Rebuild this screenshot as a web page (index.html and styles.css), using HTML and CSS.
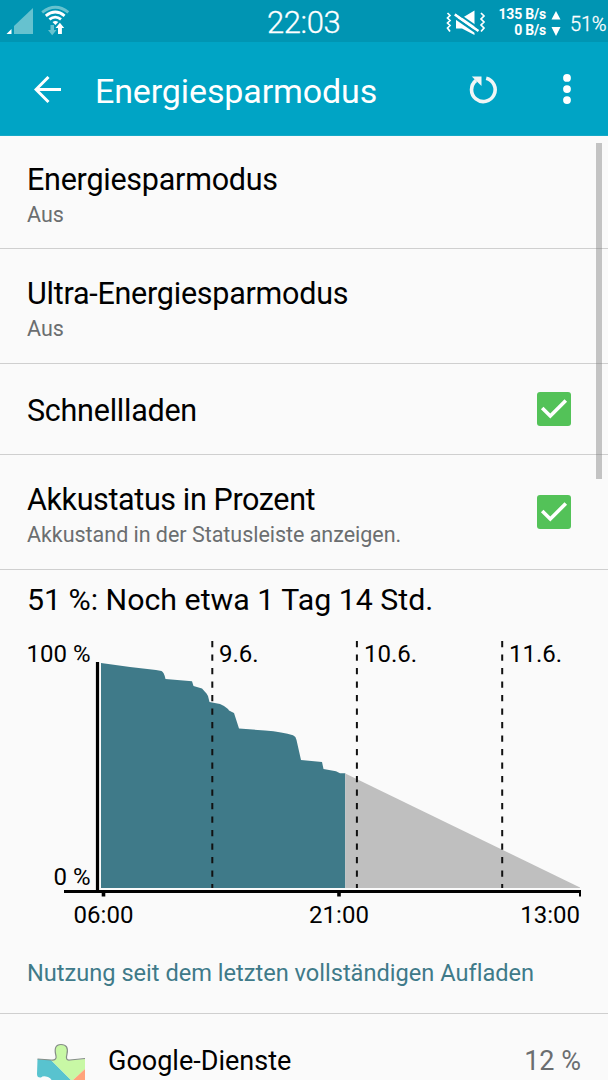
FILE: index.html
```
<!DOCTYPE html>
<html lang="de">
  <head>
    <meta charset="UTF-8" />
    <meta name="viewport" content="width=device-width, initial-scale=1.0" />
    <title>Energiesparmodus</title>
    <link rel="stylesheet" href="styles.css">
  </head>
  <body>
    <div class="statusBar">
      <svg class="statusLeft" width="80" height="42" viewBox="0 0 80 42">
        <path d="M14 34V26L33 8V34Z" fill="#66c2cf" />
        <path d="M6.5 34L11.5 29V34Z" fill="#fff" />
        <g fill="none" stroke-width="2.8">
          <path d="M42.2 12.3Q55.5 2.2 68.3 12.3" stroke="#66c2cf" />
          <path d="M45.8 15.8Q55.4 8.2 64.6 15.8" stroke="#fff" />
          <path d="M49.4 19.4Q55.4 14.8 61 19.4" stroke="#fff" />
        </g>
        <path d="M52.5 22Q55.5 19.8 58.3 22L55.4 25Z" fill="#fff" />
        <path d="M50.5 25H54V30H56.5L52.2 35.3L48 30H50.5Z" fill="#66c2cf" />
        <path d="M58 34V28H55.6L59.9 22.8L64.2 28H61.9V34Z" fill="#fff" />
      </svg>
      <span class="clock">22:03</span>
      <div class="statusRight">
        <svg width="42" height="30" viewBox="446 6 42 30">
          <path d="M456 16H462L474.500 8.500V33L462 26.500H456Z" fill="#fff" />
          <path d="M454 15L478.500 32" stroke="#0095b3" stroke-width="2.4" />
          <path d="M454.800 12.400L478.500 29" stroke="#fff" stroke-width="2.6" />
          <path d="M455.500 10L480 27" stroke="#0095b3" stroke-width="2" />
          <path d="M447.500 11L450 13.500L447.500 16L450 18.500L447.500 21L450 23.500L447.500 26L450 29.500M481 11L484 14L481 17L484 20L481 23L484 26L481 29.500" fill="none" stroke="#fff" stroke-width="1.7" />
        </svg>
        <div class="traffic">
          <span>135 B/s</span>
          <span>0 B/s</span>
        </div>
        <svg class="trafficArrows" width="10" height="26" viewBox="0 0 10 26">
          <path d="M5 1L9.500 9.500H0.500ZM0.500 17H9.500L5 26Z" fill="#fff" />
        </svg>
        <span class="percent">51%</span>
      </div>
    </div>

    <div class="appBar">
      <svg class="backIcon" width="28" height="28" viewBox="34 76 28 28">
        <path d="M48.500 77L36 89.500L48.500 102M36 89.500H61" fill="none" stroke="#fff" stroke-width="3" />
      </svg>
      <h1 class="appTitle">Energiesparmodus</h1>
      <svg class="refreshIcon" width="30" height="30" viewBox="468 74 30 30">
        <path d="M485.200 78.300A11.800 11.800 0 1 1 475 80.500" fill="none" stroke="#f1f5f5" stroke-width="3.6" />
        <path d="M470.800 76.500H480.500V86Z" fill="#f1f5f5" />
      </svg>
      <svg class="menuIcon" width="8" height="30" viewBox="0 0 8 30">
        <circle cx="4" cy="3.9" r="3.9" fill="#fff" />
        <circle cx="4" cy="15.1" r="3.9" fill="#fff" />
        <circle cx="4" cy="26.1" r="3.9" fill="#fff" />
      </svg>
    </div>

    <div class="settings">
      <div class="row rowFirst">
        <div class="rowText">
          <div class="rowTitle">Energiesparmodus</div>
          <div class="rowSub">Aus</div>
        </div>
      </div>
      <div class="row">
        <div class="rowText">
          <div class="rowTitle">Ultra-Energiesparmodus</div>
          <div class="rowSub">Aus</div>
        </div>
      </div>
      <div class="row rowShort">
        <div class="rowText">
          <div class="rowTitle">Schnellladen</div>
        </div>
        <svg class="check" width="34" height="34" viewBox="0 0 34 34">
          <rect width="34" height="34" rx="3" fill="#53c258" />
          <path d="M5.200 16L13.300 24L28.800 8.500" fill="none" stroke="#fff" stroke-width="3.6" />
        </svg>
      </div>
      <div class="row">
        <div class="rowText">
          <div class="rowTitle titlePercent">Akkustatus in Prozent</div>
          <div class="rowSub">Akkustand in der Statusleiste anzeigen.</div>
        </div>
        <svg class="check" width="34" height="34" viewBox="0 0 34 34">
          <rect width="34" height="34" rx="3" fill="#53c258" />
          <path d="M5.200 16L13.300 24L28.800 8.500" fill="none" stroke="#fff" stroke-width="3.6" />
        </svg>
      </div>

      <div class="battery">
        <div class="batteryTitle">51 %: Noch etwa 1 Tag 14 Std.</div>
        <svg class="chart" width="608" height="310" viewBox="0 630 608 310">
          <path d="M101 663L130 667L156 670L161.500 671Q164 672 165.500 679L192 681.300L193.500 686L202 688.500L206.500 693.500L208 696L209.500 702L220 704Q224 705.500 228 709L229 710.500L234 713L239 728.500L265 730.500Q283 732 293 735.200Q296 736.500 296.500 740L301 760L322 762L323.500 769L336 771.300L340 773.300L345.300 773.300V888H101Z" fill="#3f7a89" />
          <path d="M345.300 773.500L580 887.500V888H345.300Z" fill="#bfbfbf" />
          <path d="M212.300 641V888M356.900 641V888M502.200 641V888" stroke="#111" stroke-width="2" stroke-dasharray="6.300 7.200" />
          <path d="M97.500 662V893" stroke="#000" stroke-width="3.2" />
          <path d="M64 891.500H581" stroke="#000" stroke-width="3.2" />
          <path d="M103.500 893V896.500M339 893V896.500" stroke="#000" stroke-width="3.6" />
          <path d="M580 891V896.500" stroke="#000" stroke-width="2" />
          <g class="chartText">
            <text x="90.500" y="662" text-anchor="end">100 %</text>
            <text x="90.500" y="885" text-anchor="end">0 %</text>
            <text x="219" y="662">9.6.</text>
            <text x="364" y="662">10.6.</text>
            <text x="509" y="662">11.6.</text>
            <text x="103.500" y="923" text-anchor="middle">06:00</text>
            <text x="339" y="923" text-anchor="middle">21:00</text>
            <text x="580" y="923" text-anchor="end">13:00</text>
          </g>
        </svg>
        <div class="usageTitle">Nutzung seit dem letzten vollständigen Aufladen</div>
      </div>

      <div class="appRow">
        <svg class="appIcon" width="50" height="40" viewBox="36 1040 50 40">
          <path d="M37.500 1058L51 1059L72 1080H52Q51 1077 48 1076Q43 1074.500 41 1076.500Q37 1077 37 1073Z" fill="#58c3cf" />
          <path d="M51 1059Q57 1059.500 56 1055Q53 1043.500 61 1043.500Q69 1043.500 67 1053Q65 1060 70 1059L85 1058V1068L72 1080Z" fill="#c8f8a5" />
          <path d="M85 1068V1080H72Z" fill="#ffa37b" />
          <path d="M37.500 1058L51 1059Q57 1059.500 56 1055Q53 1043.500 61 1043.500Q69 1043.500 67 1053Q65 1060 70 1059L85 1057.500" fill="none" stroke="#858d87" stroke-width="1.2" />
        </svg>
        <span class="appName">Google-Dienste</span>
        <span class="appUsage">12 %</span>
      </div>
    </div>
    <div class="scrollbar"></div>
  </body>
</html>
```
FILE: styles.css
```
* {
  box-sizing: border-box;
}
body {
  margin: 0;
  width: 608px;
  height: 1080px;
  overflow: hidden;
  position: relative;
  background-color: #fafafa;
  color: #000;
  font-family: Roboto, sans-serif;
  font-variant-ligatures: none;
}
svg {
  display: block;
  flex-shrink: 0;
}
.statusBar {
  height: 42px;
  display: grid;
  grid-template-columns: 267px 1fr 162px;
  background: #0095b3;
  color: #fff;
}
.clock {
  font-size: 31px;
  line-height: 46px;
  font-weight: 300;
  letter-spacing: -0.4px;
  white-space: nowrap;
  -webkit-text-stroke: 0.3px #fff;
}
.statusRight {
  display: flex;
  align-items: center;
}
.traffic {
  width: 58px;
  display: flex;
  flex-direction: column;
  text-align: right;
  font-size: 14px;
  font-weight: 700;
  letter-spacing: -0.2px;
  line-height: 16px;
  margin-top: -3px;
  white-space: nowrap;
}
.trafficArrows {
  margin: 0 9px 0 5px;
}
.percent {
  font-size: 20px;
  font-weight: 300;
  letter-spacing: -0.2px;
  margin-top: 2px;
  -webkit-text-stroke: 0.3px #fff;
}
.appBar {
  height: 94px;
  padding: 0 37px 0 34px;
  display: flex;
  align-items: center;
  background: #00a4c5;
  border-bottom: 1px solid #16a9c7;
  color: #fff;
}
.backIcon {
  margin-top: 2px;
}
.appTitle {
  flex: 1;
  margin: 5px 0 0 33px;
  font-size: 34px;
  font-weight: 400;
  letter-spacing: -0.12px;
}
.refreshIcon {
  margin-right: 64px;
}
.row {
  height: 115px;
  padding: 0 37px 0 27px;
  display: flex;
  align-items: center;
  justify-content: space-between;
  border-bottom: 1px solid #cfcfcf;
}
.rowFirst {
  height: 113px;
}
.rowText {
  padding-top: 8px;
}
.rowShort {
  height: 91px;
}
.rowShort .rowText {
  padding-top: 4px;
}
.rowTitle {
  font-size: 30.5px;
  line-height: 36px;
  letter-spacing: -0.25px;
  white-space: nowrap;
}
.titlePercent {
  letter-spacing: -0.38px;
}
.rowSub {
  font-size: 21.5px;
  line-height: 33px;
  letter-spacing: -0.03px;
  color: #6b6e70;
  white-space: nowrap;
}
.battery {
  height: 444px;
  border-bottom: 1px solid #cfcfcf;
}
.batteryTitle {
  height: 60px;
  padding-left: 27px;
  font-size: 30.3px;
  line-height: 59px;
}
.chartText {
  font-size: 24px;
}
.usageTitle {
  padding-left: 27px;
  font-size: 23.6px;
  line-height: 67px;
  color: #3f7a89;
}
.appRow {
  height: 94px;
  padding: 0 27px 0 36px;
  display: flex;
  align-items: center;
}
.appIcon {
  margin-right: 22px;
}
.appName {
  flex: 1;
  font-size: 27px;
}
.appUsage {
  font-size: 27px;
  color: #6b6e70;
}
.scrollbar {
  position: absolute;
  top: 143px;
  left: 596px;
  width: 6px;
  height: 336px;
  background: rgba(120, 120, 120, 0.42);
}
```
